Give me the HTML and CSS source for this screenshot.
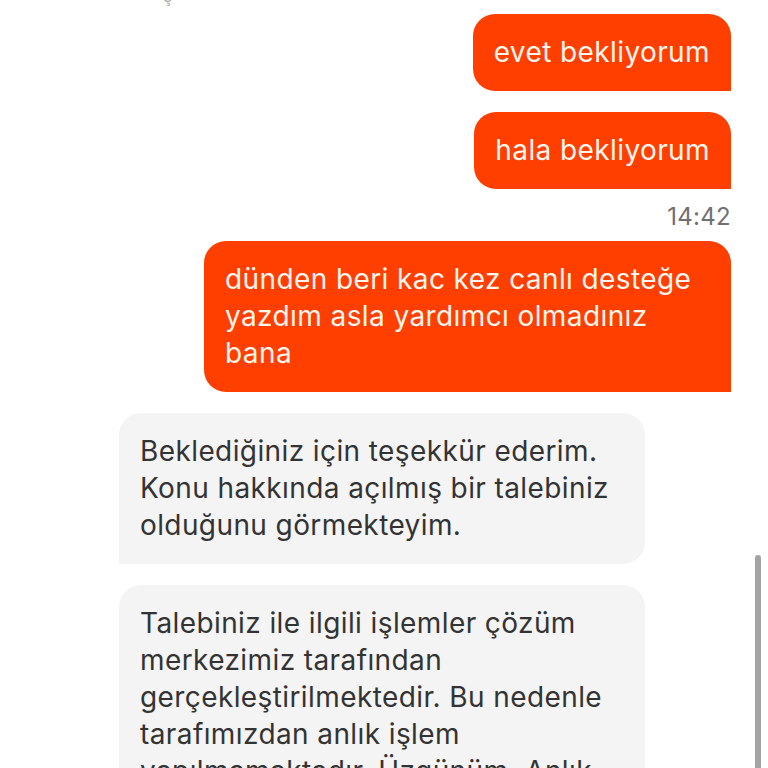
FILE: index.html
```html
<!DOCTYPE html>
<html lang="tr">
<head>
<meta charset="utf-8">
<title>Chat</title>
<link rel="stylesheet" href="styles.css">
</head>
<body>
<div class="chat">
  <div class="prev-tail">ş</div>
  <div class="msg user first">evet bekliyorum</div>
  <div class="msg user">hala bekliyorum</div>
  <div class="time">14:42</div>
  <div class="msg user tight">dünden beri kac kez canlı desteğe yazdım asla yardımcı olmadınız bana</div>
  <div class="msg bot">Beklediğiniz için teşekkür ederim. Konu hakkında açılmış bir talebiniz olduğunu görmekteyim.</div>
  <div class="msg bot">Talebiniz ile ilgili işlemler çözüm merkezimiz tarafından gerçekleştirilmektedir. Bu nedenle tarafımızdan anlık işlem yapılmamaktadır. Üzgünüm. Anlık işlem yapılamamaktadır.</div>
</div>
<div class="scrollbar"></div>
</body>
</html>
```

FILE: styles.css
```css
html, body {
  margin: 0;
  padding: 0;
  background: #ffffff;
  height: 768px;
  overflow: hidden;
}
body {
  font-family: "Inter", "Noto Sans", sans-serif;
  position: relative;
}
.chat {
  display: flex;
  flex-direction: column;
  padding: 0 37px 0 119px;
}
.prev-tail {
  height: 0;
  margin-left: 44px;
  font-size: 18px;
  line-height: 18px;
  margin-top: -13px;
  color: #b0b0b0;
}
.msg {
  font-size: 28px;
  letter-spacing: 0.4px;
  line-height: 37px;
  padding: 20px 21px;
  max-width: 527px;
  box-sizing: border-box;
  margin-top: 21px;
}
.msg.first {
  margin-top: 27px;
}
.user {
  align-self: flex-end;
  background: #ff3f00;
  color: #fff6ef;
  border-radius: 22px 22px 0 22px;
}
.user.tight {
  margin-top: 11px;
}
.bot {
  align-self: flex-start;
  background: #f4f4f4;
  color: #333333;
  border-radius: 22px 22px 22px 0;
  max-width: 526px;
}
.time {
  align-self: flex-end;
  font-size: 24px;
  letter-spacing: 0.3px;
  line-height: 26px;
  color: #707070;
  margin-top: 15px;
}
.scrollbar {
  position: absolute;
  left: 755px;
  top: 555px;
  width: 6px;
  height: 213px;
  background: #a3a3a3;
  border-radius: 3px 3px 0 0;
}
```
